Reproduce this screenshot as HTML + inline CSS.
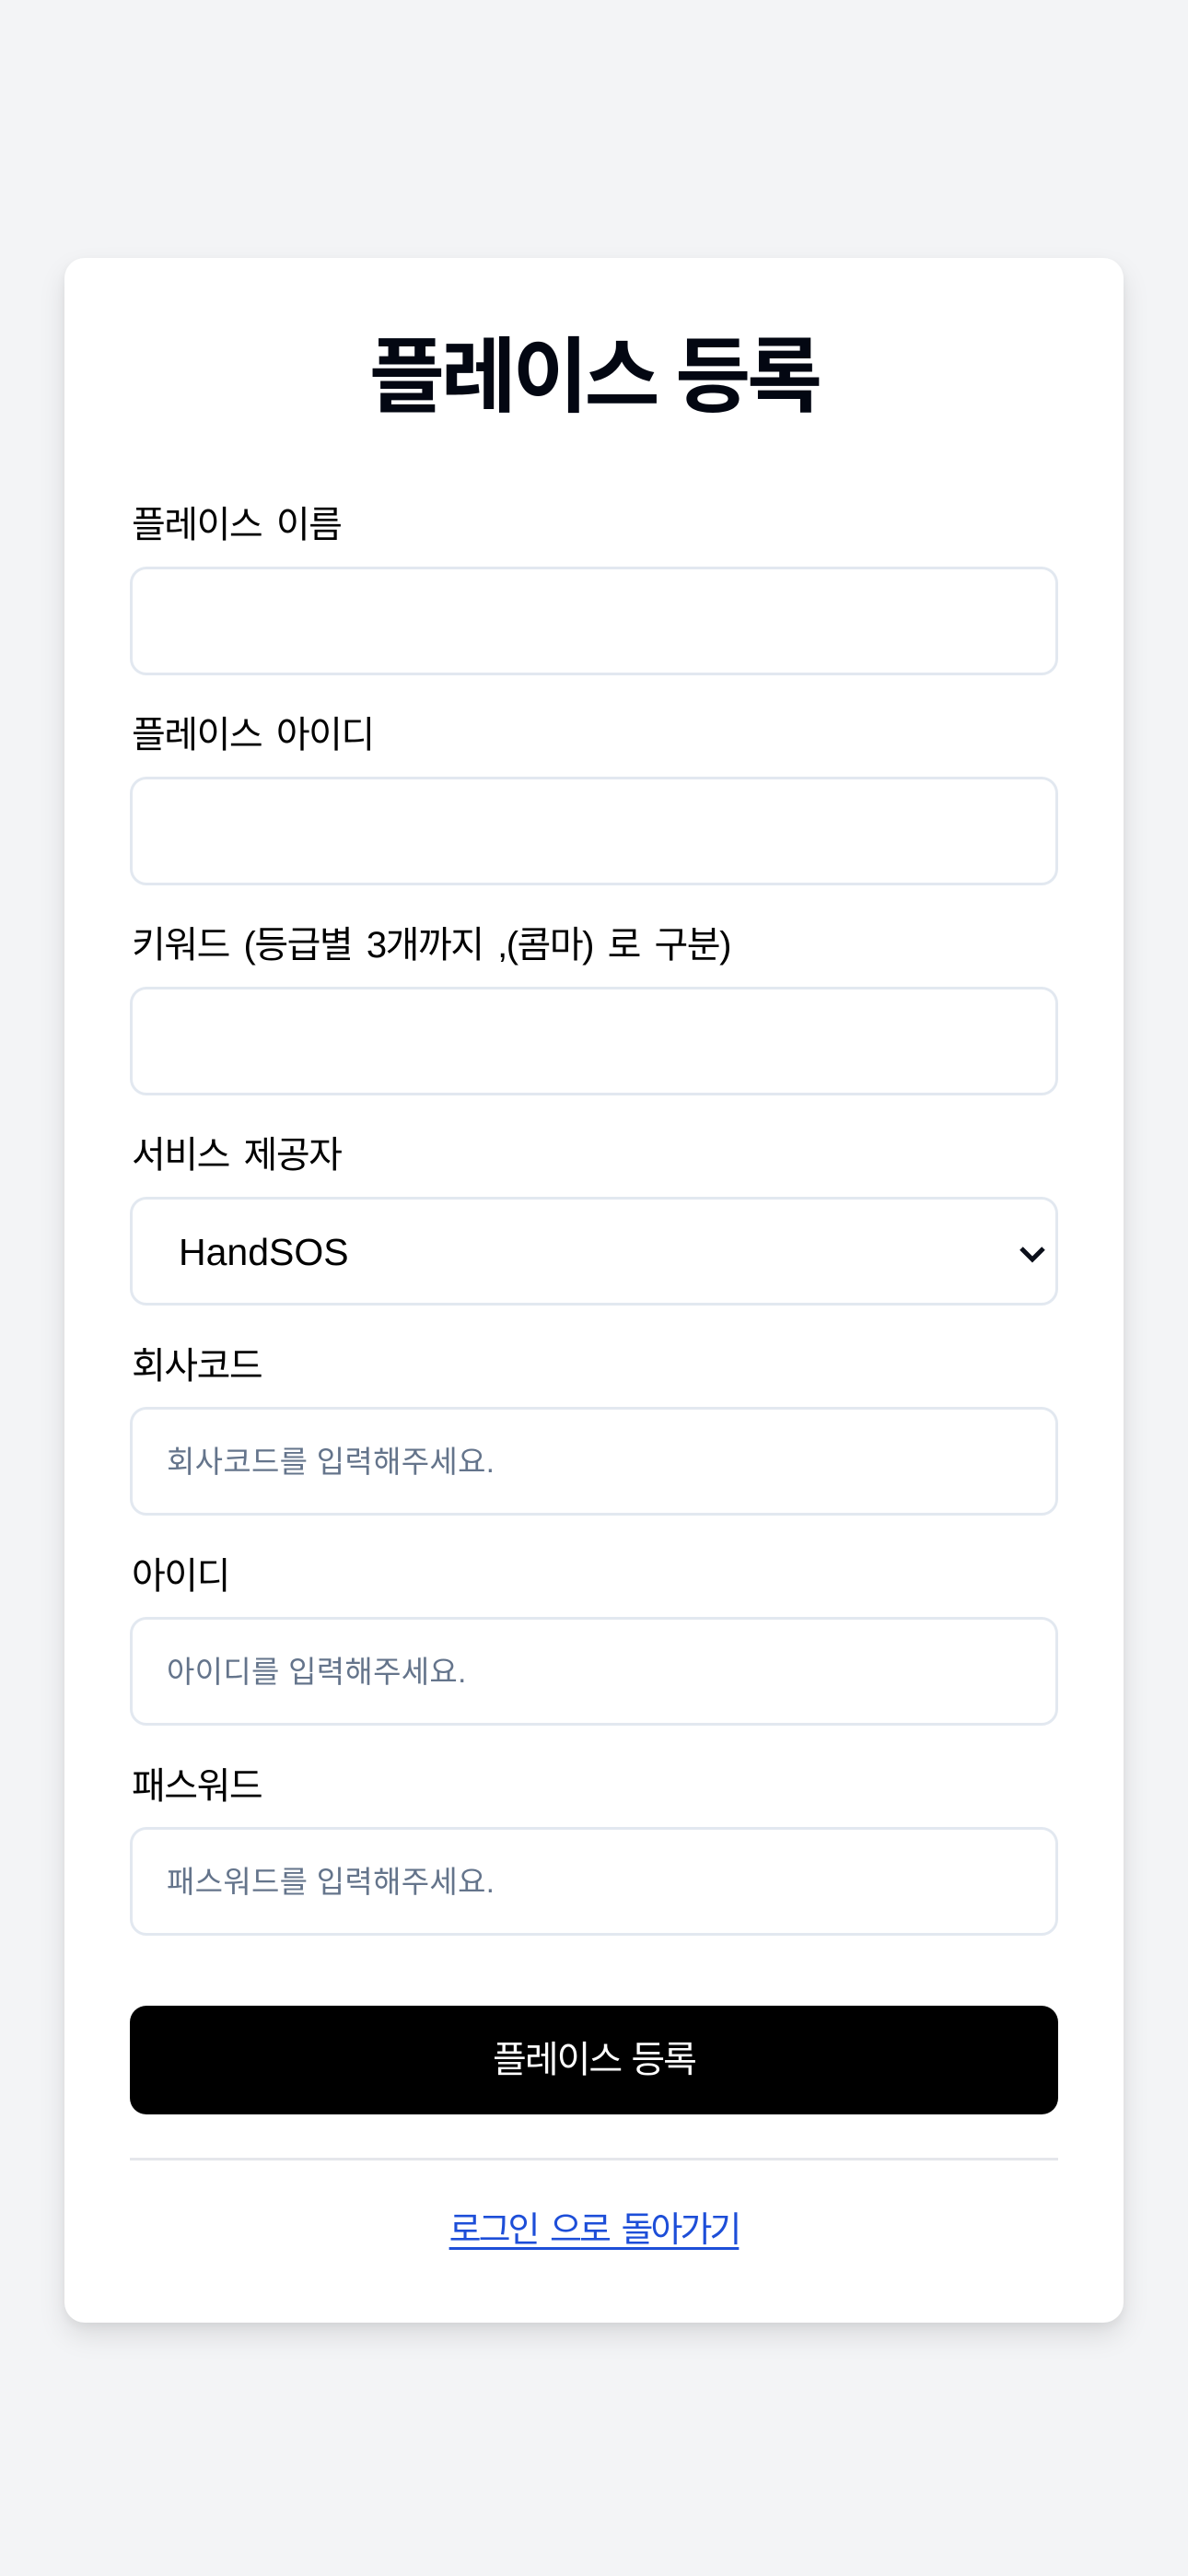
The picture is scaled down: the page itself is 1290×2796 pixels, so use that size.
<!DOCTYPE html>
<html><head><meta charset="utf-8">
<style>
*{box-sizing:border-box;margin:0;padding:0}
html,body{width:1290px;height:2796px;background:#f3f4f6;overflow:hidden}
body{font-family:"Liberation Sans","Noto Sans CJK KR",sans-serif;position:relative}
.card{position:absolute;left:70px;top:280px;width:1150px;height:2241px;background:#fff;border-radius:22px;box-shadow:0 14px 30px rgba(0,0,0,0.10),0 4px 10px rgba(0,0,0,0.05)}
.title{position:absolute;left:0;width:1290px;top:354px;text-align:center;font-size:89px;font-weight:bold;color:#030712;line-height:110px;letter-spacing:-4px}
.lbl{position:absolute;left:143px;font-size:40px;line-height:50px;color:#000;letter-spacing:-1.5px;word-spacing:6px;white-space:nowrap}
.inp{position:absolute;left:141px;width:1008px;height:118px;border:3px solid #e2e8f0;border-radius:18px;background:#fff}
.ph{position:absolute;left:37px;top:0;line-height:114px;font-size:33px;color:#64748b;letter-spacing:0.3px;word-spacing:0px;white-space:nowrap}
.sel{position:absolute;left:50px;top:0;line-height:114px;font-size:41px;color:#000}
.btn{position:absolute;left:141px;top:2177px;width:1008px;height:118px;background:#000;border-radius:18px;color:#fff;font-size:40px;text-align:center;line-height:118px;letter-spacing:-2px;word-spacing:2px}
.hr{position:absolute;left:141px;top:2342px;width:1008px;height:3px;background:#e5e7eb}
.link{position:absolute;left:0;width:1290px;top:2396px;text-align:center;font-size:38px;line-height:50px;color:#1d4ed8;letter-spacing:-3px;word-spacing:6px}
.link span{text-decoration:underline;text-decoration-thickness:3px;text-underline-offset:6px}
</style></head><body>
<div class="card"></div>
<div class="title">플레이스 등록</div>

<div class="lbl" style="top:545px">플레이스 이름</div>
<div class="inp" style="top:615px"></div>

<div class="lbl" style="top:773px">플레이스 아이디</div>
<div class="inp" style="top:843px"></div>

<div class="lbl" style="top:1001px">키워드 (등급별 3개까지 ,(콤마) 로 구분)</div>
<div class="inp" style="top:1071px"></div>

<div class="lbl" style="top:1229px">서비스 제공자</div>
<div class="inp" style="top:1299px"><div class="sel">HandSOS</div>
<svg style="position:absolute;left:962px;top:50px" width="30" height="20" viewBox="0 0 30 20"><path d="M3 3 L15 15 L27 3" fill="none" stroke="#0b0f1a" stroke-width="5"/></svg></div>

<div class="lbl" style="top:1458px">회사코드</div>
<div class="inp" style="top:1527px"><div class="ph">회사코드를 입력해주세요.</div></div>

<div class="lbl" style="top:1686px">아이디</div>
<div class="inp" style="top:1755px"><div class="ph">아이디를 입력해주세요.</div></div>

<div class="lbl" style="top:1914px">패스워드</div>
<div class="inp" style="top:1983px"><div class="ph">패스워드를 입력해주세요.</div></div>

<div class="btn">플레이스 등록</div>
<div class="hr"></div>
<div class="link"><span>로그인 으로 돌아가기</span></div>
</body></html>
